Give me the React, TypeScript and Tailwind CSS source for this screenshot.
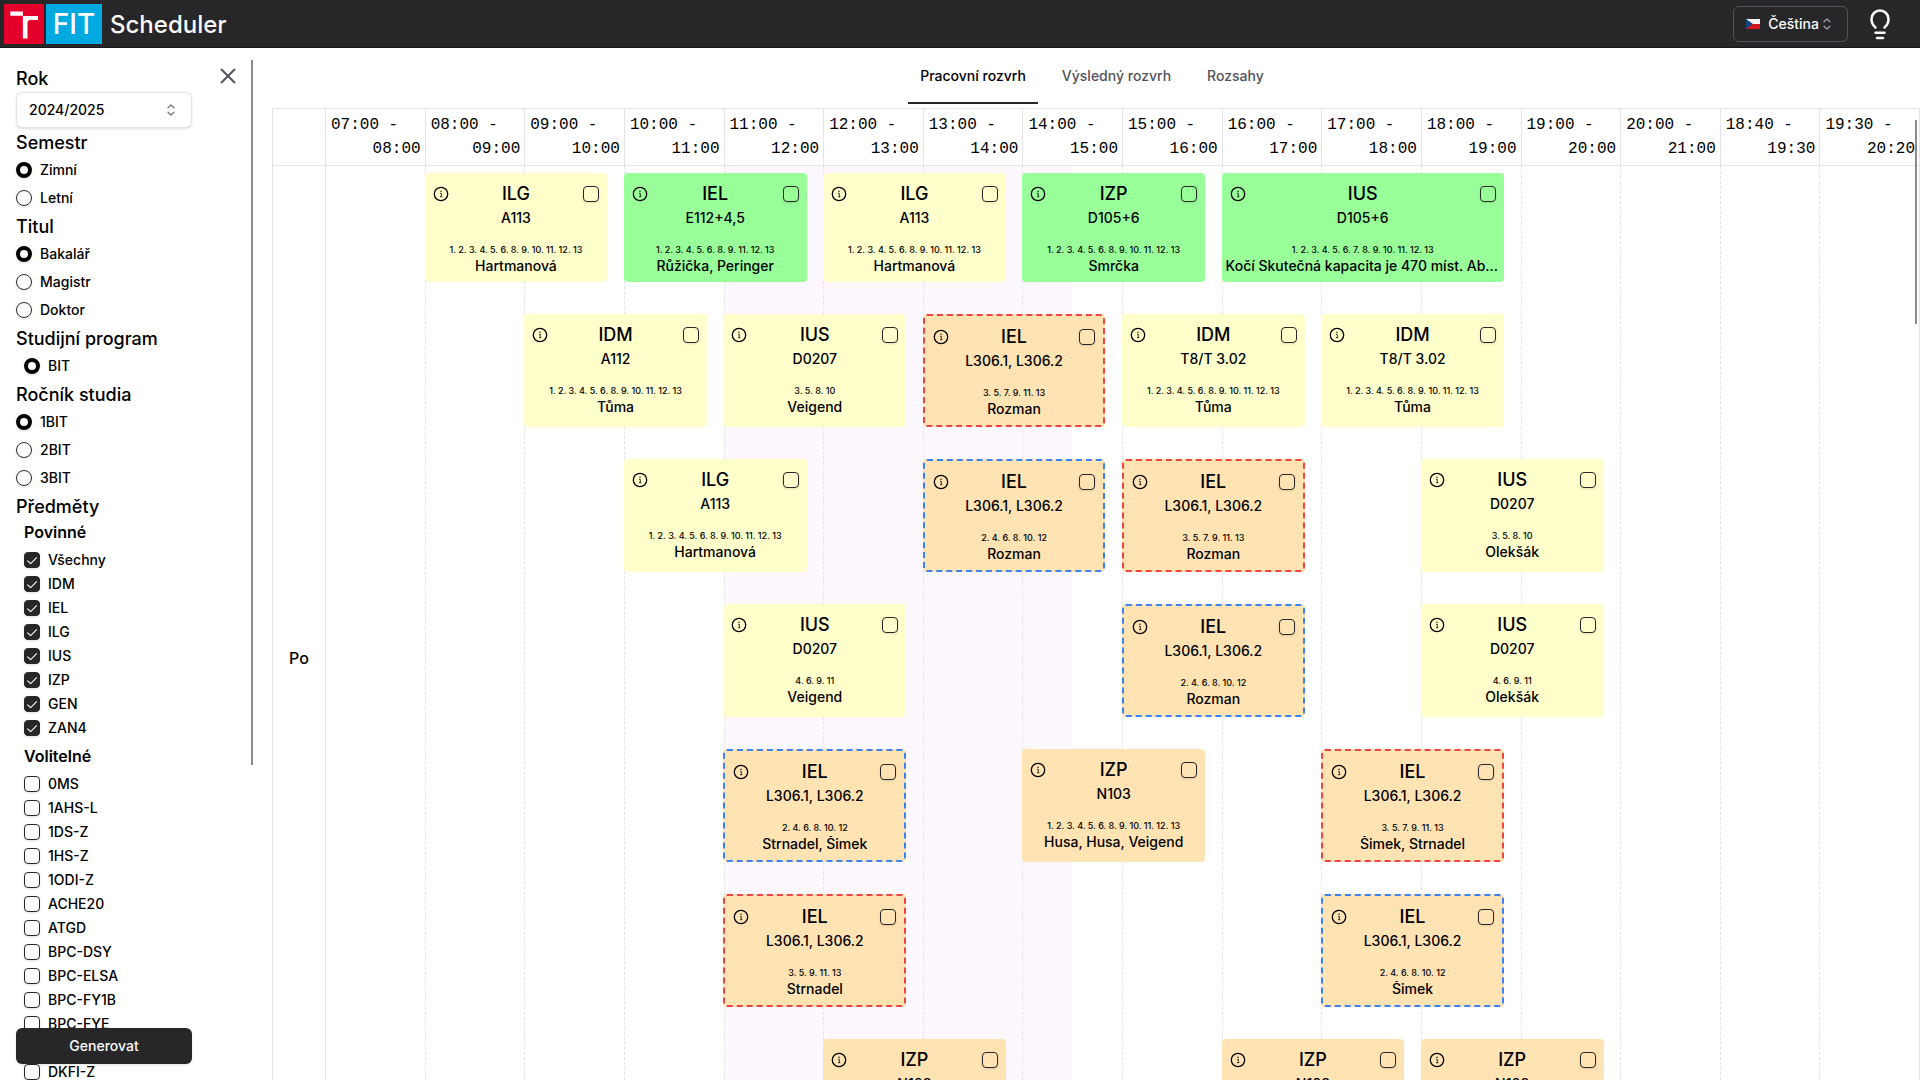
import { useState } from "react";
import type { ReactNode } from "react";

type Tone = "lecture" | "exercise" | "lab";
type Lesson = {
  code: string;
  room: string;
  weeks: string;
  teacher: string;
  row: number;
  hour: number;
  hours?: number;
  tone: Tone;
  parity?: "odd" | "even";
};

const W_ALL = "1. 2. 3. 4. 5. 6. 8. 9. 10. 11. 12. 13";
const ODD = "3. 5. 7. 9. 11. 13";
const EVEN = "2. 4. 6. 8. 10. 12";
const LAB = "L306.1, L306.2";

const lessons: Lesson[] = [
  { code: "ILG", room: "A113", weeks: W_ALL, teacher: "Hartmanová", row: 1, hour: 8, tone: "exercise" },
  { code: "IEL", room: "E112+4,5", weeks: "1. 2. 3. 4. 5. 6. 8. 9. 11. 12. 13", teacher: "Růžička, Peringer", row: 1, hour: 10, tone: "lecture" },
  { code: "ILG", room: "A113", weeks: W_ALL, teacher: "Hartmanová", row: 1, hour: 12, tone: "exercise" },
  { code: "IZP", room: "D105+6", weeks: W_ALL, teacher: "Smrčka", row: 1, hour: 14, tone: "lecture" },
  { code: "IUS", room: "D105+6", weeks: "1. 2. 3. 4. 5. 6. 7. 8. 9. 10. 11. 12. 13", teacher: "Kočí Skutečná kapacita je 470 míst. Absolventi", row: 1, hour: 16, hours: 3, tone: "lecture" },
  { code: "IDM", room: "A112", weeks: W_ALL, teacher: "Tůma", row: 2, hour: 9, tone: "exercise" },
  { code: "IUS", room: "D0207", weeks: "3. 5. 8. 10", teacher: "Veigend", row: 2, hour: 11, tone: "exercise" },
  { code: "IEL", room: LAB, weeks: ODD, teacher: "Rozman", row: 2, hour: 13, tone: "lab", parity: "odd" },
  { code: "IDM", room: "T8/T 3.02", weeks: W_ALL, teacher: "Tůma", row: 2, hour: 15, tone: "exercise" },
  { code: "IDM", room: "T8/T 3.02", weeks: W_ALL, teacher: "Tůma", row: 2, hour: 17, tone: "exercise" },
  { code: "ILG", room: "A113", weeks: W_ALL, teacher: "Hartmanová", row: 3, hour: 10, tone: "exercise" },
  { code: "IEL", room: LAB, weeks: EVEN, teacher: "Rozman", row: 3, hour: 13, tone: "lab", parity: "even" },
  { code: "IEL", room: LAB, weeks: ODD, teacher: "Rozman", row: 3, hour: 15, tone: "lab", parity: "odd" },
  { code: "IUS", room: "D0207", weeks: "3. 5. 8. 10", teacher: "Olekšák", row: 3, hour: 18, tone: "exercise" },
  { code: "IUS", room: "D0207", weeks: "4. 6. 9. 11", teacher: "Veigend", row: 4, hour: 11, tone: "exercise" },
  { code: "IEL", room: LAB, weeks: EVEN, teacher: "Rozman", row: 4, hour: 15, tone: "lab", parity: "even" },
  { code: "IUS", room: "D0207", weeks: "4. 6. 9. 11", teacher: "Olekšák", row: 4, hour: 18, tone: "exercise" },
  { code: "IEL", room: LAB, weeks: EVEN, teacher: "Strnadel, Šimek", row: 5, hour: 11, tone: "lab", parity: "even" },
  { code: "IZP", room: "N103", weeks: W_ALL, teacher: "Husa, Husa, Veigend", row: 5, hour: 14, tone: "lab" },
  { code: "IEL", room: LAB, weeks: ODD, teacher: "Šimek, Strnadel", row: 5, hour: 17, tone: "lab", parity: "odd" },
  { code: "IEL", room: LAB, weeks: "3. 5. 9. 11. 13", teacher: "Strnadel", row: 6, hour: 11, tone: "lab", parity: "odd" },
  { code: "IEL", room: LAB, weeks: EVEN, teacher: "Šimek", row: 6, hour: 17, tone: "lab", parity: "even" },
  { code: "IZP", room: "N103", weeks: W_ALL, teacher: "Husa", row: 7, hour: 12, tone: "lab" },
  { code: "IZP", room: "N103", weeks: W_ALL, teacher: "Husa", row: 7, hour: 16, tone: "lab" },
  { code: "IZP", room: "N103", weeks: W_ALL, teacher: "Veigend", row: 7, hour: 18, tone: "lab" },
];

const slots: [string, string][] = [
  ["07:00", "08:00"], ["08:00", "09:00"], ["09:00", "10:00"], ["10:00", "11:00"],
  ["11:00", "12:00"], ["12:00", "13:00"], ["13:00", "14:00"], ["14:00", "15:00"],
  ["15:00", "16:00"], ["16:00", "17:00"], ["17:00", "18:00"], ["18:00", "19:00"],
  ["19:00", "20:00"], ["20:00", "21:00"], ["18:40", "19:30"], ["19:30", "20:20"],
];

const toneClass: Record<Tone, string> = {
  lecture: "bg-[#99ff99]",
  exercise: "bg-[#ffffcc]",
  lab: "bg-[#ffe3b3]",
};

const parityClass = {
  odd: "border-2 border-dashed border-[#ef4444]",
  even: "border-2 border-dashed border-[#3b82f6]",
};

function InfoIcon() {
  return (
    <svg viewBox="0 0 16 16" className="size-4" fill="none" stroke="currentColor" aria-hidden="true">
      <circle cx="8" cy="8" r="6.7" strokeWidth="1.3" />
      <path d="M7 7.300H8.300V10.600M7 10.700h2.300" strokeWidth="0.8" />
      <circle cx="8" cy="5.300" r="0.7" fill="currentColor" stroke="none" />
    </svg>
  );
}

function CaretSort({ className }: { className: string }) {
  return (
    <svg viewBox="0 0 16 16" className={className} fill="none" stroke="currentColor" aria-hidden="true">
      <path d="M5 5.800 8 3 11 5.800M5 10.200 8 13 11 10.200" strokeWidth="1.200" strokeLinecap="round" strokeLinejoin="round" />
    </svg>
  );
}

const boxClass =
  "block size-4 shrink-0 appearance-none rounded border border-zinc-800 shadow-sm";

function LessonCard({ lesson }: { lesson: Lesson }) {
  const start = (lesson.hour - 7) * 6 + 1;
  const span = (lesson.hours ?? 2) * 6 - 1;
  return (
    <article
      className={`flex flex-col items-center rounded pt-[9px] text-center ${toneClass[lesson.tone]} ${lesson.parity ? parityClass[lesson.parity] : ""}`}
      style={{ gridRow: lesson.row, gridColumn: `${start} / span ${span}` }}
    >
      <div className="flex h-6 w-full items-center justify-between px-2">
        <button type="button" aria-label={`Detail ${lesson.code}`}>
          <InfoIcon />
        </button>
        <h3 className="text-lg leading-6">{lesson.code}</h3>
        <input type="checkbox" aria-label={`Vybrat ${lesson.code}`} className={boxClass} />
      </div>
      <p className="text-sm leading-6">{lesson.room}</p>
      <p className="mt-3 text-[9px] leading-4">{lesson.weeks}</p>
      <p className="w-full truncate px-1 pb-2 text-sm leading-4">{lesson.teacher}</p>
    </article>
  );
}

function Heading({ children }: { children: ReactNode }) {
  return <h2 className="text-lg leading-7">{children}</h2>;
}

function RadioGroup({ name, options, indent }: { name: string; options: string[]; indent?: boolean }) {
  return (
    <div className={`flex flex-col gap-3 pt-[5px] pb-[7px] ${indent ? "pl-2" : ""}`}>
      {options.map((o, i) => (
        <label key={o} className="flex h-4 items-center gap-2 text-sm leading-4">
          <input
            type="radio"
            name={name}
            defaultChecked={i === 0}
            className="size-4 appearance-none rounded-full border border-zinc-800 shadow-sm checked:border-4 checked:border-black"
          />
          {o}
        </label>
      ))}
    </div>
  );
}

function CheckList({ title, options, checked }: { title: string; options: string[]; checked?: boolean }) {
  return (
    <fieldset className="pl-2">
      <legend className="text-base leading-5 font-semibold">{title}</legend>
      <div className="flex flex-col gap-2 py-2.5">
        {options.map((o) => (
          <label key={o} className="flex h-4 items-center gap-2 text-sm leading-4">
            <span className="grid">
              <input
                type="checkbox"
                defaultChecked={checked}
                className={`peer [grid-area:1/1] checked:bg-zinc-800 ${boxClass}`}
              />
              <svg
                viewBox="0 0 16 16"
                className="pointer-events-none size-4 opacity-0 [grid-area:1/1] peer-checked:opacity-100"
                fill="none"
                stroke="white"
                aria-hidden="true"
              >
                <path d="m3.6 8.8 3 2.9 6-6" strokeWidth="1.1" strokeLinecap="round" strokeLinejoin="round" />
              </svg>
            </span>
            {o}
          </label>
        ))}
      </div>
    </fieldset>
  );
}

function Sidebar() {
  return (
    <aside className="relative w-[272px] shrink-0">
      <div className="flex h-full flex-col overflow-hidden pt-4 pl-4">
        <div className="flex h-7 w-[221px] items-start justify-between">
          <label htmlFor="year" className="pt-px text-lg leading-7">Rok</label>
          <button type="button" aria-label="Zavřít" className="mt-[3px] text-zinc-600">
            <svg viewBox="0 0 18 18" className="size-[18px]" fill="none" stroke="currentColor" aria-hidden="true">
              <path d="m2.5 2.5 13 13M15.500 2.500l-13 13" strokeWidth="1.900" strokeLinecap="round" />
            </svg>
          </button>
        </div>
        <div className="grid w-44 items-center">
          <select
            id="year"
            defaultValue="2024/2025"
            className="h-9 w-full appearance-none rounded-md border border-zinc-200 bg-white px-3 text-sm shadow-sm [grid-area:1/1]"
          >
            <option>2024/2025</option>
            <option>2023/2024</option>
          </select>
          <CaretSort className="pointer-events-none mr-[13px] size-4 justify-self-end text-zinc-500 [grid-area:1/1]" />
        </div>
        <div className="pt-px">
          <Heading>Semestr</Heading>
          <RadioGroup name="semester" options={["Zimní", "Letní"]} />
          <Heading>Titul</Heading>
          <RadioGroup name="degree" options={["Bakalář", "Magistr", "Doktor"]} />
          <Heading>Studijní program</Heading>
          <RadioGroup name="program" options={["BIT"]} indent />
          <Heading>Ročník studia</Heading>
          <RadioGroup name="grade" options={["1BIT", "2BIT", "3BIT"]} />
          <div className="mb-px">
            <Heading>Předměty</Heading>
          </div>
          <CheckList title="Povinné" checked options={["Všechny", "IDM", "IEL", "ILG", "IUS", "IZP", "GEN", "ZAN4"]} />
          <CheckList
            title="Volitelné"
            options={["0MS", "1AHS-L", "1DS-Z", "1HS-Z", "1ODI-Z", "ACHE20", "ATGD", "BPC-DSY", "BPC-ELSA", "BPC-FY1B", "BPC-FYE", "BPC-OOP", "DKFI-Z"]}
          />
        </div>
      </div>
      <div className="absolute top-3 right-[19px] h-[705px] w-0.5 bg-[#8a8a8a]" />
      <button
        type="button"
        className="absolute bottom-4 left-4 h-9 w-44 rounded-md bg-zinc-800 text-sm text-zinc-50 shadow"
      >
        Generovat
      </button>
    </aside>
  );
}

function Timetable() {
  return (
    <section className="grid grid-cols-[52px_minmax(0,1fr)] border-t border-l border-zinc-200">
      <div className="border-b border-zinc-200" />
      <div className="grid grid-cols-16 border-r border-b border-zinc-200 font-['Liberation_Mono',monospace] text-base leading-6 font-normal">
        {slots.map(([from, to]) => (
          <div key={from + to} className="flex flex-col border-l border-zinc-200 py-1 pr-1 pl-[5px]">
            <span className="whitespace-nowrap">{from} -</span>
            <span className="text-right">{to}</span>
          </div>
        ))}
      </div>
      <div className="flex items-center justify-center border-b border-zinc-200 text-base">Po</div>
      <div className="grid border-r border-b border-zinc-200">
        <div className="grid grid-cols-96 [grid-area:1/1]">
          <div className="col-[25/span_21] bg-[#fdf7ff]" />
        </div>
        <div className="grid grid-cols-16 [grid-area:1/1]">
          {slots.map(([from, to]) => (
            <div key={from + to} className="border-l border-dashed border-zinc-200 first:border-solid" />
          ))}
        </div>
        <div className="grid grid-cols-96 gap-y-8 pt-[7px] pb-0.5 [grid-area:1/1]">
          {lessons.map((l) => (
            <LessonCard key={`${l.row}-${l.hour}`} lesson={l} />
          ))}
        </div>
      </div>
    </section>
  );
}

const tabs = ["Pracovní rozvrh", "Výsledný rozvrh", "Rozsahy"];

export default function App() {
  const [tab, setTab] = useState(tabs[0]);
  return (
    <div className="flex h-screen flex-col overflow-hidden bg-white font-['Inter',sans-serif] font-medium text-black">
      <header className="flex h-12 shrink-0 items-center justify-between border-b border-zinc-900 bg-zinc-800 pr-7 pl-1 text-zinc-50">
        <div className="flex items-center">
          <svg viewBox="0 0 40 40" className="size-10" aria-hidden="true">
            <rect width="40" height="40" fill="#e4002b" />
            <path d="M6.300 7.500h12.600v4.300H6.300ZM18.900 12H34v4h-7.500q-3 0-3 3V34.500h-4.600Z" fill="#fff" />
          </svg>
          <span className="ml-0.5 flex h-10 w-14 items-center justify-center bg-[#00a9e0] text-[28px] leading-none text-white">
            FIT
          </span>
          <h1 className="ml-2 pt-0.5 text-2xl">Scheduler</h1>
        </div>
        <div className="flex items-center gap-5">
          <button type="button" className="flex h-9 items-center rounded-md border border-zinc-600 px-3 text-sm">
            <svg viewBox="0 0 14 10" className="mr-2 h-2.5 w-3.5" aria-hidden="true">
              <rect width="14" height="5" fill="#f4f4f5" />
              <rect y="5" width="14" height="5" fill="#d7141a" />
              <path d="M0 0 7 5 0 10Z" fill="#11457e" />
            </svg>
            Čeština
            <CaretSort className="size-4 text-zinc-400" />
          </button>
          <button type="button" aria-label="Přepnout motiv">
            <svg viewBox="0 0 24 32" className="h-8 w-6" fill="none" stroke="currentColor" strokeWidth="2.500" strokeLinecap="round" strokeLinejoin="round" aria-hidden="true">
              <path d="M7.500 19.500C4.500 17 3.500 14 3.500 11a8.500 8.500 0 0 1 17 0c0 3-1 6-4 8.500M7.500 24.700h9M9 30h6" />
            </svg>
          </button>
        </div>
      </header>
      <div className="flex min-h-0 flex-1">
        <Sidebar />
        <main className="relative min-w-0 flex-1 overflow-hidden">
          <nav className="flex h-[60px] items-start justify-center gap-3 pr-2 text-sm">
            {tabs.map((t) => (
              <button
                key={t}
                type="button"
                onClick={() => setTab(t)}
                className={`h-14 border-b-2 px-3 pt-0.5 ${t === tab ? "border-zinc-800 text-black" : "border-transparent text-zinc-600"}`}
              >
                {t}
              </button>
            ))}
          </nav>
          <Timetable />
          <div className="absolute top-[72px] right-[3px] h-[204px] w-0.5 bg-[#8a8a8a]" />
        </main>
      </div>
    </div>
  );
}
